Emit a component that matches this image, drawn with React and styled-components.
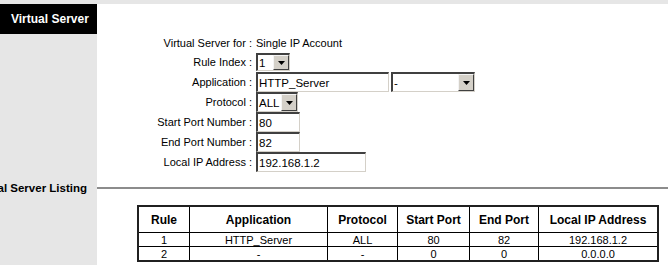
import React from 'react';
import styled, {createGlobalStyle} from 'styled-components';

const GlobalStyle = createGlobalStyle`
    html, body {
        margin: 0;
        padding: 0;
        background: #ffffff;
        font-family: "Liberation Sans", Arial, sans-serif;
        font-size: 11px;
        color: #000;
    }
`;

const SIDE = '#e6e6e6';

const Page = styled.div`
    display: grid;
    grid-template-columns: 97px 1fr;
    grid-template-rows: 4px 30px 145px 18px auto;
    width: 668px;
    height: 265px;
    overflow: hidden;
`;

const TopStrip = styled.div`
    grid-column: 1 / 3;
    background: ${SIDE};
`;

const Side = styled.div`
    background: ${SIDE};
`;

const SideTitle = styled.div`
    background: #000;
    color: #fff;
    font-weight: bold;
    font-size: 12px;
    display: flex;
    align-items: center;
    padding-left: 11px;
`;

const Main = styled.div`
    background: #fff;
`;

const FormGrid = styled.div`
    display: grid;
    grid-template-columns: 159px auto;
    grid-template-rows: 18px repeat(6, 20px);
`;

const Label = styled.div`
    padding-right: 4px;
    display: flex;
    align-items: center;
    justify-content: flex-end;
    white-space: nowrap;
`;

const Field = styled.div`
    display: flex;
    align-items: center;
    gap: 2px;
`;

const TextBox = styled.div`
    box-sizing: border-box;
    width: ${p => p.$w}px;
    height: 20px;
    border-top: 2px solid #404040;
    border-left: 2px solid #404040;
    border-right: 1px solid #d4d0c8;
    border-bottom: 1px solid #d4d0c8;
    background: #fff;
    display: flex;
    align-items: center;
    padding-left: 1px;
    font-size: 11.5px;
`;

const SelectBox = styled.div`
    box-sizing: border-box;
    width: ${p => p.$w}px;
    height: ${p => p.$h || 20}px;
    border-top: 2px solid #404040;
    border-left: 2px solid #404040;
    border-right: 1px solid #d4d0c8;
    border-bottom: 1px solid #d4d0c8;
    background: #fff;
    display: flex;
    align-items: center;
    font-size: 11.5px;
`;

const SelectValue = styled.span`
    flex: 1;
    padding-left: 1px;
    overflow: hidden;
    white-space: nowrap;
`;

const ArrowButton = styled.span`
    box-sizing: border-box;
    width: 16px;
    height: ${p => p.$h || 16}px;
    background: #d4d0c8;
    border-top: 1px solid #f4f4f4;
    border-left: 1px solid #f4f4f4;
    border-right: 1px solid #404040;
    border-bottom: 1px solid #404040;
    display: flex;
    align-items: center;
    justify-content: center;
`;

const ListingTitle = styled.div`
    background: ${SIDE};
    display: flex;
    justify-content: flex-end;
    align-items: center;
    padding-right: 10px;
    overflow: hidden;
    white-space: nowrap;
    font-weight: bold;
    font-size: 11.5px;
`;

const RuleLine = styled.div`
    display: flex;
    align-items: center;
    &::after {
        content: '';
        flex: 1;
        height: 2px;
        background: #8c8c8c;
    }
`;

const TableWrap = styled.div`
    padding: 8px 0 0 40px;
`;

const Table = styled.table`
    width: 522px;
    border-collapse: collapse;
    border: 2px solid #202020;
    font-size: 11px;
    th, td {
        border: 1px solid #000;
        text-align: center;
        padding: 0;
    }
    th {
        height: 25px;
        font-weight: bold;
        font-size: 12px;
    }
    td {
        height: 13px;
        line-height: 12px;
    }
`;

const Arrow = ({h}) => (
    <ArrowButton $h={h}>
        <svg width="7" height="4" viewBox="0 0 7 4"><path d="M0 0h7L3.5 4z" fill="#000"/></svg>
    </ArrowButton>
);

const Select = ({w, h, value}) => (
    <SelectBox $w={w} $h={h}>
        <SelectValue>{value}</SelectValue>
        <Arrow h={h ? h - 3 : 17}/>
    </SelectBox>
);

const rows = [
    ['1', 'HTTP_Server', 'ALL', '80', '82', '192.168.1.2'],
    ['2', '-', '-', '0', '0', '0.0.0.0'],
];

const App = () => {
    return <>
        <GlobalStyle/>
        <Page>
            <TopStrip/>
            <SideTitle>Virtual Server</SideTitle>
            <Main/>
            <Side/>
            <Main>
                <FormGrid>
                    <Label>Virtual Server for :</Label>
                    <Field>Single IP Account</Field>
                    <Label>Rule Index :</Label>
                    <Field><Select w={34} h={18} value="1"/></Field>
                    <Label>Application :</Label>
                    <Field>
                        <TextBox $w={133}>HTTP_Server</TextBox>
                        <Select w={84} value="-"/>
                    </Field>
                    <Label>Protocol :</Label>
                    <Field><Select w={42} value="ALL"/></Field>
                    <Label>Start Port Number :</Label>
                    <Field><TextBox $w={44}>80</TextBox></Field>
                    <Label>End Port Number :</Label>
                    <Field><TextBox $w={44}>82</TextBox></Field>
                    <Label>Local IP Address :</Label>
                    <Field><TextBox $w={110}>192.168.1.2</TextBox></Field>
                </FormGrid>
            </Main>
            <ListingTitle>Virtual Server Listing</ListingTitle>
            <RuleLine/>
            <Side/>
            <Main>
                <TableWrap>
                    <Table>
                        <thead>
                            <tr>
                                <th style={{width: 50}}>Rule</th>
                                <th style={{width: 137}}>Application</th>
                                <th style={{width: 69}}>Protocol</th>
                                <th style={{width: 71}}>Start Port</th>
                                <th style={{width: 68}}>End Port</th>
                                <th>Local IP Address</th>
                            </tr>
                        </thead>
                        <tbody>
                            {rows.map(r => <tr key={r[0]}>
                                {r.map((c, i) => <td key={i}>{c}</td>)}
                            </tr>)}
                        </tbody>
                    </Table>
                </TableWrap>
            </Main>
        </Page>
    </>;
};

export default App;
